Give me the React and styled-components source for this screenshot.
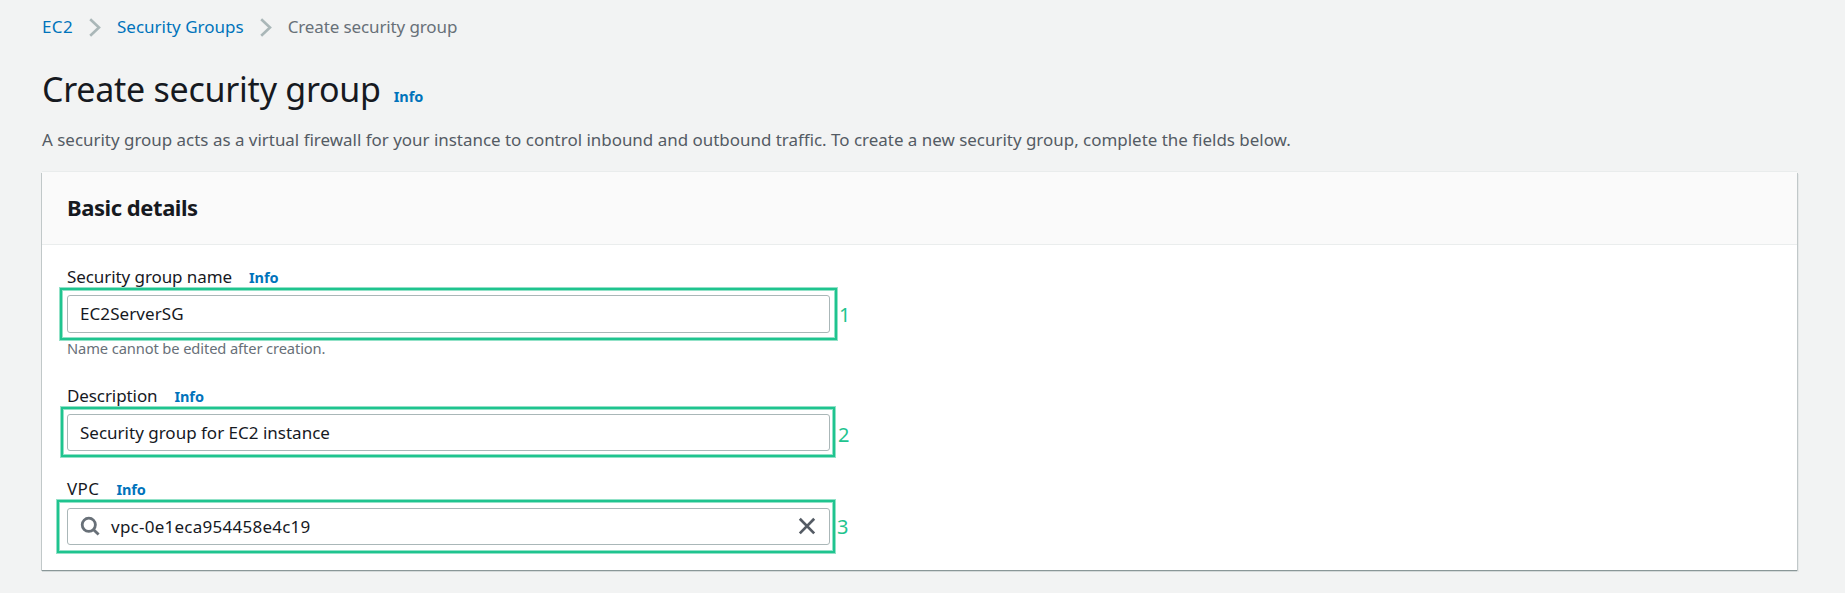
import React from "react";
import styled, { createGlobalStyle } from "styled-components";

const GlobalStyle = createGlobalStyle`
  * { box-sizing: border-box; }
  body {
    margin: 0;
    background: #f2f3f3;
    color: #16191f;
    font-family: "Noto Sans", "Open Sans", sans-serif;
    font-size: 17px;
    line-height: 23px;
  }
`;

const Page = styled.main`
  min-height: 593px;
  padding: 15px 48px 23px 42px;
`;

const Breadcrumbs = styled.nav`
  display: flex;
  align-items: center;
  gap: 16px;
  height: 23px;
`;

const Crumb = styled.a`
  color: ${(p) => (p.$current ? "#687078" : "#0073bb")};
  letter-spacing: ${(p) => p.$tracking || 0}px;
  text-decoration: none;
  white-space: nowrap;
`;

const ChevronIcon = styled.svg`
  width: 12px;
  height: 19px;
  margin-top: 2px;
  fill: none;
  stroke: #aab7b8;
  stroke-width: 2.6;
`;

const TitleRow = styled.header`
  display: flex;
  align-items: baseline;
  gap: 13px;
  height: 46px;
  margin-top: 28px;
`;

const Title = styled.h1`
  margin: 0;
  font-size: 34px;
  line-height: 46px;
  font-weight: 400;
  letter-spacing: -0.26px;
`;

const InfoLink = styled.a`
  color: #0073bb;
  font-size: 14.5px;
  line-height: 20px;
  font-weight: 700;
  letter-spacing: -0.1px;
  text-decoration: none;
`;

const Intro = styled.p`
  margin: 16px 0 21px;
  color: #545b64;
  font-size: 16.96px;
`;

const Card = styled.section`
  background: #fff;
  box-shadow:
    0 1px 0 #8a9798,
    0 -1px 0 #e9ecec,
    1px 1px 0 #c1c8c9,
    -1px 1px 0 #c1c8c9,
    0 2px 0 #d5dada,
    2px 2px 0 #e6e9e9;
`;

const CardHeader = styled.div`
  height: 73px;
  padding: 20px 25px 0;
  background: #fafafa;
  border-bottom: 1px solid #eaeded;
`;

const CardTitle = styled.h2`
  margin: 0;
  font-size: 22px;
  line-height: 30px;
  font-weight: 700;
  letter-spacing: -0.44px;
`;

const CardBody = styled.div`
  display: flex;
  flex-direction: column;
  gap: 26px;
  padding: 20px 25px 25px;
`;

const FormField = styled.div`
  width: 763px;
`;

const LabelRow = styled.div`
  display: flex;
  align-items: baseline;
  gap: 17px;
  height: 23px;
  margin-bottom: ${(p) => p.$space || 7}px;
`;

const Label = styled.label`
  letter-spacing: ${(p) => p.$tracking}px;
`;

const InputWrap = styled.div`
  position: relative;
`;

const InputBox = styled.div`
  display: flex;
  align-items: center;
  height: ${(p) => (p.$tall ? 38 : 37)}px;
  padding: 0 12px ${(p) => (p.$tall ? 1 : 0)}px;
  background: #fff;
  border: 1px solid #aab7b8;
  border-radius: 3px;
`;

const Value = styled.span`
  flex: 1;
  letter-spacing: ${(p) => p.$tracking || 0}px;
`;

const SearchIcon = styled.svg`
  width: 20px;
  height: 21px;
  margin-right: 11px;
  fill: none;
  stroke: #687078;
  stroke-width: 2.8;
`;

const ClearIcon = styled.svg`
  width: 18px;
  height: 19px;
  margin-right: 1px;
  fill: none;
  stroke: #545b64;
  stroke-width: 2.7;
`;

const Hint = styled.div`
  height: 20px;
  margin-top: 5px;
  color: #687078;
  font-size: 14.7px;
  line-height: 20px;
  letter-spacing: -0.11px;
`;

const Highlight = styled.div`
  position: absolute;
  inset: ${(p) => p.$inset};
  border: 2px solid #1fc48f;
  box-shadow: 0 0 0 1px #93e2c8, inset 0 0 0 1px #93e2c8;
  pointer-events: none;
`;

const StepNumber = styled.span`
  position: absolute;
  left: calc(100% + ${(p) => p.$x}px);
  top: ${(p) => p.$y}px;
  color: #1fc48f;
  font-size: 20px;
  line-height: 27px;
`;

const Chevron = () => (
  <ChevronIcon viewBox="0 0 12 19">
    <path d="M1.2 1.2 10 9.5 1.2 17.8" />
  </ChevronIcon>
);

export default function App() {
  return (
    <>
      <GlobalStyle />
      <Page>
        <Breadcrumbs>
          <Crumb $tracking={0.35}>EC2</Crumb>
          <Chevron />
          <Crumb>Security Groups</Crumb>
          <Chevron />
          <Crumb $current $tracking={-0.12}>Create security group</Crumb>
        </Breadcrumbs>

        <TitleRow>
          <Title>Create security group</Title>
          <InfoLink>Info</InfoLink>
        </TitleRow>
        <Intro>
          A security group acts as a virtual firewall for your instance to control inbound and
          outbound traffic. To create a new security group, complete the fields below.
        </Intro>

        <Card>
          <CardHeader>
            <CardTitle>Basic details</CardTitle>
          </CardHeader>
          <CardBody>
            <FormField>
              <LabelRow>
                <Label $tracking={-0.08}>Security group name</Label>
                <InfoLink>Info</InfoLink>
              </LabelRow>
              <InputWrap>
                <InputBox $tall>
                  <Value $tracking={0.08}>EC2ServerSG</Value>
                </InputBox>
                <Highlight $inset="-7px">
                  <StepNumber $x={4} $y={11}>1</StepNumber>
                </Highlight>
              </InputWrap>
              <Hint>Name cannot be edited after creation.</Hint>
            </FormField>

            <FormField>
              <LabelRow>
                <Label $tracking={-0.09}>Description</Label>
                <InfoLink>Info</InfoLink>
              </LabelRow>
              <InputWrap>
                <InputBox>
                  <Value>Security group for EC2 instance</Value>
                </InputBox>
                <Highlight $inset="-7px -5px -6px -6px">
                  <StepNumber $x={5} $y={12}>2</StepNumber>
                </Highlight>
              </InputWrap>
            </FormField>

            <FormField>
              <LabelRow $space={8}>
                <Label $tracking={0.4}>VPC</Label>
                <InfoLink>Info</InfoLink>
              </LabelRow>
              <InputWrap>
                <InputBox>
                  <SearchIcon viewBox="0 0 20 21">
                    <circle cx="8.8" cy="8.8" r="6.6" />
                    <path d="m13.4 13.4 5.2 5.2" />
                  </SearchIcon>
                  <Value $tracking={0.25}>vpc-0e1eca954458e4c19</Value>
                  <ClearIcon viewBox="0 0 18 19">
                    <path d="m1.8 1.8 14.4 14.6M16.2 1.8 1.8 16.4" />
                  </ClearIcon>
                </InputBox>
                <Highlight $inset="-8px -5px -8px -10px">
                  <StepNumber $x={4} $y={11}>3</StepNumber>
                </Highlight>
              </InputWrap>
            </FormField>
          </CardBody>
        </Card>
      </Page>
    </>
  );
}
